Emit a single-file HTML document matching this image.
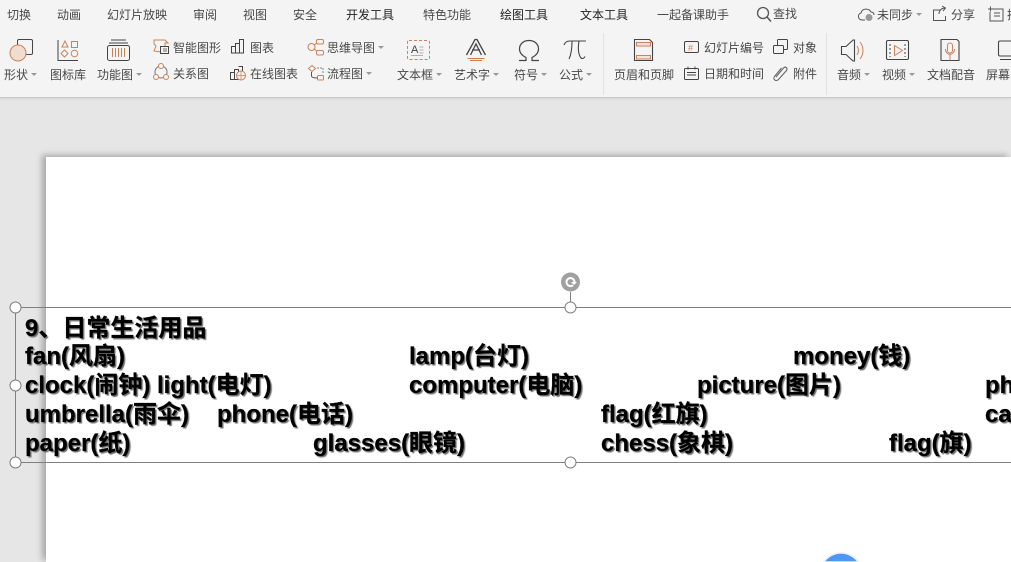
<!DOCTYPE html>
<html lang="zh"><head><meta charset="utf-8"><style>
html,body{margin:0;padding:0;width:1011px;height:562px;overflow:hidden}
body{position:relative;background:#e6e6e6;font-family:"Liberation Sans","Noto Sans CJK SC",sans-serif}
#p{position:absolute;left:0;top:0;width:1011px;height:562px;overflow:hidden}
.r{position:absolute;left:0;top:0;width:1011px;height:97px;background:#f4f4f4;border-bottom:1px solid #c9c9c9;box-shadow:0 1px 2px #d4d4d4}
.t{position:absolute;font-size:12px;line-height:16px;color:#484848;white-space:nowrap}
.a::after{content:"";display:inline-block;border:3px solid transparent;border-top:3px solid #999;border-bottom:0;margin-left:3px;vertical-align:3px}
.s{position:absolute;left:46px;top:157px;width:965px;height:405px;background:#fff;box-shadow:-4px -2px 6px #a8a8a8}
.w{position:absolute;font-size:24px;line-height:29px;font-weight:bold;color:#000;white-space:nowrap;text-shadow:1.5px 1.5px 1px #6e6e6e;-webkit-text-stroke:.25px #000}
svg{position:absolute;left:0;top:0}
.sep{position:absolute;top:33px;width:1px;height:62px;background:#e2e2e2}
</style></head><body><div id="p">
<div class="r"></div>
<div class="t" style="left:7px;top:7px">切换</div>
<div class="t" style="left:57px;top:7px">动画</div>
<div class="t" style="left:107px;top:7px">幻灯片放映</div>
<div class="t" style="left:193px;top:7px">审阅</div>
<div class="t" style="left:243px;top:7px">视图</div>
<div class="t" style="left:293px;top:7px">安全</div>
<div class="t" style="left:346px;top:7px;color:#222">开发工具</div>
<div class="t" style="left:423px;top:7px">特色功能</div>
<div class="t" style="left:500px;top:7px;color:#222">绘图工具</div>
<div class="t" style="left:580px;top:7px;color:#222">文本工具</div>
<div class="t" style="left:657px;top:7px">一起备课助手</div>
<div class="t" style="left:773px;top:6px">查找</div>
<div class="t a" style="left:877px;top:7px">未同步</div>
<div class="t" style="left:951px;top:7px">分享</div>
<div class="t" style="left:1007px;top:7px">插</div>

<div class="t a" style="left:4px;top:67px">形状</div>
<div class="t" style="left:50px;top:67px">图标库</div>
<div class="t a" style="left:97px;top:67px">功能图</div>
<div class="t" style="left:173px;top:40px">智能图形</div>
<div class="t" style="left:173px;top:66px">关系图</div>
<div class="t" style="left:250px;top:40px">图表</div>
<div class="t" style="left:250px;top:66px">在线图表</div>
<div class="t a" style="left:327px;top:40px">思维导图</div>
<div class="t a" style="left:327px;top:66px">流程图</div>
<div class="t a" style="left:397px;top:67px">文本框</div>
<div class="t a" style="left:454px;top:67px">艺术字</div>
<div class="t a" style="left:514px;top:67px">符号</div>
<div class="t a" style="left:559px;top:67px">公式</div>
<div class="t" style="left:614px;top:67px">页眉和页脚</div>
<div class="t" style="left:704px;top:40px">幻灯片编号</div>
<div class="t" style="left:704px;top:66px">日期和时间</div>
<div class="t" style="left:793px;top:40px">对象</div>
<div class="t" style="left:793px;top:66px">附件</div>
<div class="t a" style="left:837px;top:67px">音频</div>
<div class="t a" style="left:882px;top:67px">视频</div>
<div class="t" style="left:927px;top:67px">文档配音</div>
<div class="t" style="left:986px;top:67px">屏幕录制</div>
<div class="sep" style="left:603px"></div>
<div class="sep" style="left:826px"></div>

<svg width="1011" height="97" fill="none" stroke="#444" stroke-width="1">
<!-- shape -->
<rect x="17.500" y="39.500" width="15" height="15" rx="1.500"/><circle cx="18" cy="53" r="8" fill="#f0ddd0" stroke="#c98358"/>
<!-- icon lib -->
<path d="M58 40V60.500H78"/><path d="M65 41l3 6h-6z" stroke="#c98358"/><rect x="71.500" y="41.500" width="6" height="6" stroke="#c98358"/><path d="M64.500 50l3.500 3.500-3.500 3.500-3.500-3.500z" stroke="#c98358"/><circle cx="74.500" cy="53.500" r="3.300" stroke="#c98358"/>
<!-- function -->
<path d="M111 40h15M109 43h19"/><rect x="107.500" y="45.500" width="22" height="15" rx="2"/><path d="M112.500 48v9M115.500 48v9M118.500 48v9M121.500 48v9M124.500 48v9" stroke="#c98358"/>
<!-- smart -->
<path d="M154 40h11l3 3h-3v9h-4l-7-1 2-5-2-2z" stroke="#c98358"/><rect x="160.500" y="46.500" width="8" height="7" fill="#f4f4f4"/><path d="M163 49h4M163 51h4" stroke-width=".8"/>
<!-- relation -->
<circle cx="161" cy="72" r="6" stroke="#777"/><circle cx="161" cy="66" r="2.500" fill="#f4f4f4" stroke="#c98358"/><circle cx="156" cy="77" r="2.500" fill="#f4f4f4" stroke="#c98358"/><circle cx="166" cy="77" r="2.500" fill="#f4f4f4" stroke="#c98358"/>
<!-- chart -->
<path d="M231.500 46.500h4v6.500h-4zM235.500 43.500h4v9.500h-4zM239.500 39.500h4v13.500h-4z"/>
<path d="M230.500 72.500h4v7h-4zM234.500 69.500h4v10h-4zM238.500 66.500h4v6"/><circle cx="241" cy="75.500" r="4.500" stroke="#c98358" fill="#f4f4f4"/><path d="M236.500 75.500h9M241 71v9" stroke="#c98358" stroke-width=".7"/>
<!-- mind -->
<g stroke="#c98358"><circle cx="311.500" cy="47" r="3.500"/><rect x="316.500" y="39.500" width="7" height="4.500" rx="1.500"/><rect x="316.500" y="50.500" width="7" height="4.500" rx="1.500"/><path d="M314.500 45l2-2M314.500 49l2 2"/>
<path d="M312 65.500l3.500 3-3.500 3-3.500-3z"/><rect x="317.500" y="75.500" width="6" height="4.500" rx="1"/></g><path d="M311.500 72v4c0 1.500 2 2 6 2" stroke="#555"/><path d="M317 68h6v5" stroke="#888" stroke-dasharray="2 1"/>
<!-- textbox -->
<rect x="407.500" y="40.500" width="22" height="19" rx="1.500" stroke="#c98358" stroke-dasharray="3 2"/><text x="411" y="53" font-family="Liberation Sans" font-size="11" fill="#444" stroke="none">A</text><path d="M419.500 47h4M419.500 50h4M419.500 53h4M411 55.500h12" stroke="#999" stroke-width=".8"/>
<!-- art -->
<path d="M466.500 55L475 39.500h2L485.500 55M470.500 55l5.500-11 5.500 11M472 50h8" stroke="#444" stroke-width="1.300"/><path d="M467.500 58.500h17M470 60.500h12" stroke="#d08050"/>
<!-- omega -->
<path d="M519 60.500h7v-3c-4-2-6.500-5-6.500-8.500 0-5 4-8.500 9.500-8.500s9.500 3.500 9.500 8.500c0 3.500-2.500 6.500-6.500 8.500v3h7" stroke-width="1.200"/>
<!-- pi -->
<path d="M564 45c1-3 3-4 6-4h16M572 41c0 7-1 14-3 18M579 41c-1 6-1 13 2 17 1.500 1 3 .5 4-1.500" stroke-width="1.100"/>
<!-- header/footer -->
<path d="M634.500 39.500h15l3 3v18h-18z" stroke-width="1.100"/><rect x="636.500" y="42.500" width="14" height="3.500" stroke="#c98358" fill="#f3e3d8"/><rect x="636.500" y="55.500" width="14" height="3.500" stroke="#c98358" fill="#f3e3d8"/>
<!-- slide number -->
<rect x="684.500" y="41.500" width="14" height="11" rx="1.500"/><text x="688" y="51" font-family="Liberation Sans" font-size="9" fill="#c98358" stroke="none">#</text>
<rect x="684.500" y="68.500" width="14" height="11" rx="1"/><path d="M688 66.500v3M695 66.500v3M687 72.500h9M687 75h9" stroke-width=".9"/>
<!-- object -->
<rect x="777.500" y="39.500" width="10" height="10" rx="1"/><rect x="773.500" y="45.500" width="10" height="8" rx="1" fill="#f4f4f4"/>
<path d="M776 77l7.500-9c2-2 4.500 0 3 2.500l-8 9c-3 2.500-6-.5-4-3l7-8.500" stroke="#666" stroke-width="1.100"/>
<!-- audio -->
<path d="M841.500 46.500h4.500l7-6.500h1.500v21h-1.500l-7-6.500h-4.500z" stroke-width="1.100"/><path d="M857 46c2 3 2 6 0 9M860 42c4 5 4 12 0 17" stroke="#c98358"/>
<!-- video -->
<rect x="886.500" y="40.500" width="22" height="19" rx="1.500" stroke-width="1.100"/><path d="M890 44v13M905 44v13" stroke-dasharray="2 2"/><path d="M894.500 45.500l8 5-8 5z" stroke="#c98358"/>
<!-- doc voice -->
<path d="M941 39.500h16l2 2v19h-18z" stroke-width="1.100"/><rect x="947.500" y="43" width="5" height="10" rx="2.500" stroke="#c98358"/><path d="M945.500 49c0 7 9 7 9 0M950 54.500v6" stroke="#c98358"/>
<!-- screen -->
<path d="M1011 41h-11c-1 0-1.500.5-1.500 1.500v12c0 1 .5 1.500 1.500 1.500h11M1000 59.500h11" stroke-width="1.100"/>
<!-- search -->
<circle cx="763" cy="13" r="5.500" stroke="#555" stroke-width="1.300"/><path d="M767 17l4 4.500" stroke="#555" stroke-width="1.500"/>
<!-- cloud -->
<path d="M865 20h-3c-4 0-5-6-1-7 1-5 8-5 10-1 2 0 3 1 3 3" stroke="#555"/><circle cx="869" cy="17.500" r="3.500" fill="#999" stroke="none"/>
<!-- share -->
<path d="M941 10h-7.500v10.500h12V16M939 14c0-4 3-6 6-6M942 6l3.500 2-2.500 3" stroke="#555"/>
<!-- add -->
<path d="M993 9h10v12h-13v-9M988 9h5M990.500 6.500v5M994 13h6M994 16h6" stroke="#555"/>
</svg>

<div class="s"></div>
<div class="w" style="left:25px;top:314px">9、日常生活用品</div>
<div class="w" style="left:25px;top:342px">fan(风扇)</div>
<div class="w" style="left:409px;top:342px">lamp(台灯)</div>
<div class="w" style="left:793px;top:342px">money(钱)</div>
<div class="w" style="left:25px;top:371px">clock(闹钟)</div>
<div class="w" style="left:157px;top:371px">light(电灯)</div>
<div class="w" style="left:409px;top:371px">computer(电脑)</div>
<div class="w" style="left:697px;top:371px">picture(图片)</div>
<div class="w" style="left:985px;top:371px">phone</div>
<div class="w" style="left:25px;top:400px">umbrella(雨伞)</div>
<div class="w" style="left:217px;top:400px">phone(电话)</div>
<div class="w" style="left:601px;top:400px">flag(红旗)</div>
<div class="w" style="left:985px;top:400px">cat</div>
<div class="w" style="left:25px;top:429px">paper(纸)</div>
<div class="w" style="left:313px;top:429px">glasses(眼镜)</div>
<div class="w" style="left:601px;top:429px">chess(象棋)</div>
<div class="w" style="left:889px;top:429px">flag(旗)</div>

<svg width="1011" height="562" fill="none" style="z-index:5">
<path d="M15.500 307.500H1011M15.500 462.500H1011M15.500 307.500V462.500" stroke="#808080" stroke-width="1"/>
<path d="M570.500 292V307" stroke="#808080"/>
<circle cx="570.500" cy="282" r="9.500" fill="#a0a0a0"/>
<path d="M574.500 282a4 4 0 1 0-1.500 3.200" stroke="#fff" stroke-width="2"/>
<path d="M571 282h6l-3 3z" fill="#fff"/>
<g fill="#fff" stroke="#808080"><circle cx="15.500" cy="307.500" r="5.500"/><circle cx="15.500" cy="385.500" r="5.500"/><circle cx="15.500" cy="462.500" r="5.500"/><circle cx="570.500" cy="307.500" r="5.500"/><circle cx="570.500" cy="462.500" r="5.500"/></g>
<path d="M823.800 562A21 21 0 0 1 858.200 562Z" fill="#4d98f5" stroke="#e8f0f5" stroke-width="1.500"/>
</svg>
</div></body></html>
